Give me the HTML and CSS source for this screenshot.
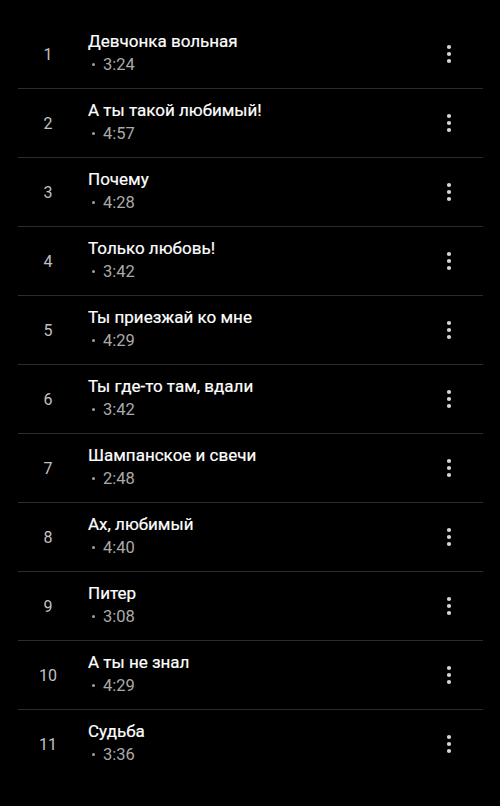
FILE: index.html
```html
<!doctype html>
<html>
  <head>
    <meta charset=utf-8>
    <title>Треки</title>
    <link rel="stylesheet" href="styles.css">
  </head>
  <body>
    <div id=tracks class=tracks></div>

    <script>
      const tracks = [
        ['Девчонка вольная', '3:24'],
        ['А ты такой любимый!', '4:57'],
        ['Почему', '4:28'],
        ['Только любовь!', '3:42'],
        ['Ты приезжай ко мне', '4:29'],
        ['Ты где-то там, вдали', '3:42'],
        ['Шампанское и свечи', '2:48'],
        ['Ах, любимый', '4:40'],
        ['Питер', '3:08'],
        ['А ты не знал', '4:29'],
        ['Судьба', '3:36']
      ];
      const more = `<svg width=24 height=24 viewBox="0 0 24 24"><circle cx=12 cy=5 r=2.1 /><circle cx=12 cy=12 r=2.1 /><circle cx=12 cy=19 r=2.1 /></svg>`;
      let list = document.getElementById('tracks');
      tracks.forEach(([title, time], i) => {
        let row = document.createElement('DIV');
        row.classList.add('track');
        row.innerHTML = `
          <div class=track-num>${i + 1}</div>
          <div class=track-info>
            <div class=track-title>${title}</div>
            <div class=track-time>${time}</div>
          </div>
          <div class=track-more>${more}</div>`;
        list.appendChild(row);
      });
    </script>
  </body>
</html>
```

FILE: styles.css
```css
html, body {
  margin: 0;
  background: #000;
}

.tracks {
  padding: 20px 17px 0 18px;
  font-family: Roboto, 'Noto Sans', sans-serif;
}

.track {
  display: flex;
  align-items: center;
  height: 68px;
  border-bottom: 1px solid #2c2c2c;
}
.track:last-child { border-bottom: none }

.track-num {
  width: 60px;
  text-align: center;
  font-size: 16px;
  color: #c0c0c0;
}

.track-info {
  flex: 1;
  margin-left: 10px;
  padding-bottom: 2px;
}
.track-title {
  font-size: 17px;
  line-height: 22px;
  color: #fff;
  -webkit-text-stroke: 0.2px #fff;
}
.track-time {
  margin-top: 1px;
  font-size: 16.5px;
  line-height: 24px;
  color: #aaa;
  padding-left: 4px;
}
.track-time::before {
  content: '';
  display: inline-block;
  width: 3px;
  height: 3px;
  border-radius: 50%;
  background: #a0a0a0;
  margin-right: 8px;
  vertical-align: middle;
  position: relative;
  top: -1px;
}

.track-more {
  width: 24px;
  height: 24px;
  margin-right: 22px;
  fill: #d6d6d6;
}
.track-more svg { display: block }
```
